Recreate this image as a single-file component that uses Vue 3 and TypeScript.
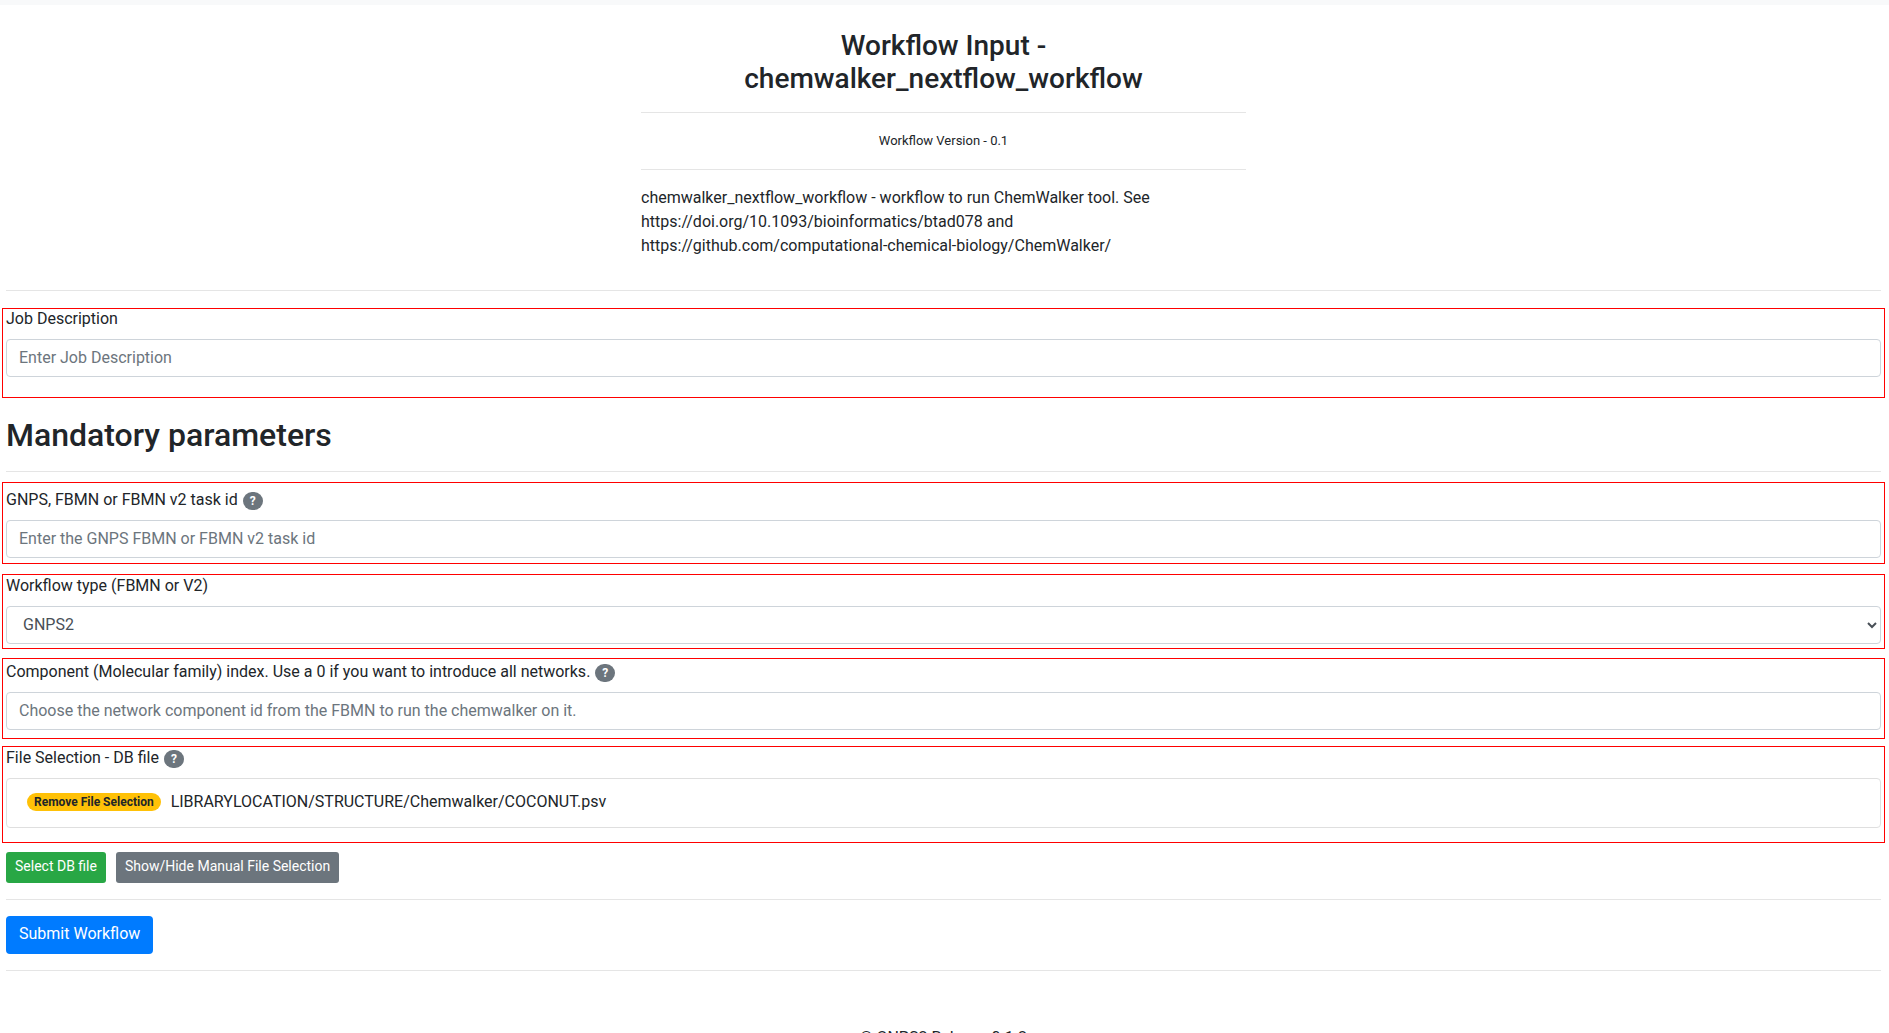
<script setup lang="ts">
import { ref } from 'vue'

const jobDescription = ref('')
const taskId = ref('')
const workflowType = ref('GNPS2')
const componentIndex = ref('')
const dbFile = ref('LIBRARYLOCATION/STRUCTURE/Chemwalker/COCONUT.psv')
</script>

<template>
  <div class="page">
    <div class="navbar-edge"></div>
    <main class="content">
      <header class="intro">
        <h1>Workflow Input - chemwalker_nextflow_workflow</h1>
        <hr />
        <p class="version">Workflow Version - 0.1</p>
        <hr />
        <p class="about">
          chemwalker_nextflow_workflow - workflow to run ChemWalker tool. See
          https://doi.org/10.1093/bioinformatics/btad078 and
          https://github.com/computational-chemical-biology/ChemWalker/
        </p>
      </header>
      <hr />
      <form @submit.prevent>
        <section class="field job">
          <label for="job">Job Description</label>
          <input id="job" v-model="jobDescription" type="text" placeholder="Enter Job Description" />
        </section>

        <h2>Mandatory parameters</h2>
        <hr />

        <section class="field task">
          <div class="label-row">
            <label for="task">GNPS, FBMN or FBMN v2 task id</label>
            <span class="badge help">?</span>
          </div>
          <input id="task" v-model="taskId" type="text" placeholder="Enter the GNPS FBMN or FBMN v2 task id" />
        </section>

        <section class="field type">
          <label for="type">Workflow type (FBMN or V2)</label>
          <select id="type" v-model="workflowType">
            <option>GNPS2</option>
            <option>FBMN</option>
          </select>
        </section>

        <section class="field component">
          <div class="label-row">
            <label for="component">Component (Molecular family) index. Use a 0 if you want to introduce all networks.</label>
            <span class="badge help">?</span>
          </div>
          <input
            id="component"
            v-model="componentIndex"
            type="text"
            placeholder="Choose the network component id from the FBMN to run the chemwalker on it."
          />
        </section>

        <section class="field file">
          <div class="label-row">
            <span class="caption">File Selection - DB file</span>
            <span class="badge help">?</span>
          </div>
          <div class="file-item">
            <button type="button" class="badge remove">Remove File Selection</button>
            <span>{{ dbFile }}</span>
          </div>
        </section>

        <div class="actions">
          <button type="button" class="btn small green">Select DB file</button>
          <button type="button" class="btn small gray">Show/Hide Manual File Selection</button>
        </div>
        <hr />
        <button type="submit" class="btn blue">Submit Workflow</button>
        <hr />
      </form>
    </main>
    <footer>© GNPS2 Release 0.1.2</footer>
  </div>
</template>

<style>
html {
  overflow: hidden;
}
body {
  margin: 0;
  height: 100vh;
  overflow: hidden;
  background: #fff;
}
</style>

<style scoped>
.page,
.page * {
  box-sizing: border-box;
}
.page {
  font-family: Roboto, 'Liberation Sans', sans-serif;
  font-size: 16px;
  line-height: 24px;
  color: #212529;
}
.navbar-edge {
  height: 5px;
  background: #f8f9fa;
}
.content {
  padding: 24px 8px 0 6px;
}
hr {
  height: 1px;
  margin: 16px 0;
  border: 0;
  background: #e5e5e5;
}
.intro {
  width: calc((100% + 30px) / 3 - 30px);
  margin: 0 auto;
}
h1 {
  margin: 0 0 17px;
  font-size: 28px;
  line-height: 33px;
  font-weight: 500;
  text-align: center;
}
.version {
  margin: 0;
  font-size: 13px;
  text-align: center;
}
.about {
  margin: 0;
  padding-bottom: 16px;
}
h2 {
  margin: 18px 0 16px;
  font-size: 32px;
  line-height: 39px;
  font-weight: 500;
}
h2 + hr {
  margin-bottom: 10px;
}

/* Outlined groups extend slightly beyond the content column */
.field {
  display: flex;
  flex-direction: column;
  gap: 10px;
  margin: 0 -4px;
  padding: 1px 3px;
  border: 1px solid #f00;
  line-height: 20px;
}
.job {
  margin-top: 17px;
  padding-top: 0;
  padding-bottom: 20px;
}
.task {
  padding-top: 7px;
  padding-bottom: 5px;
  margin-bottom: 10px;
}
.type {
  padding-bottom: 4px;
  margin-bottom: 9px;
}
.component {
  padding-top: 3px;
  padding-bottom: 8px;
  margin-bottom: 7px;
}
.file {
  padding-bottom: 14px;
  margin-bottom: 9px;
}
.label-row {
  display: flex;
  align-items: flex-end;
  gap: 5px;
  height: 20px;
}
.badge {
  display: inline-block;
  height: 18px;
  padding: 3px 7px;
  border: 0;
  border-radius: 10px;
  font-family: inherit;
  font-size: 12px;
  line-height: 12px;
  font-weight: 700;
  white-space: nowrap;
}
.help {
  background: #6c757d;
  color: #fff;
}
.remove {
  background: #ffc107;
  color: #212529;
}
input,
select {
  display: block;
  width: 100%;
  height: 38px;
  margin: 0;
  padding: 5px 12px 7px;
  border: 1px solid #ced4da;
  border-radius: 4px;
  background: #fff;
  color: #495057;
  font-family: inherit;
  font-size: 16px;
  line-height: 24px;
}
input::placeholder {
  color: #6c757d;
  opacity: 1;
}
.file-item {
  display: flex;
  align-items: center;
  gap: 10px;
  height: 50px;
  padding: 0 20px 2px;
  border: 1px solid #dfdfdf;
  border-radius: 4px;
}
.actions {
  display: flex;
  gap: 10px;
}
.btn {
  display: block;
  height: 38px;
  padding: 6px 13px 8px;
  border: 0;
  border-radius: 4px;
  color: #fff;
  font-family: inherit;
  font-size: 16px;
  line-height: 24px;
}
.small {
  height: 31px;
  padding: 4px 9px 6px;
  border-radius: 3px;
  font-size: 14px;
  line-height: 21px;
}
.green {
  background: #28a745;
}
.gray {
  background: #6c757d;
}
.blue {
  background: #007bff;
}
footer {
  padding: 39px 8px 24px 6px;
  text-align: center;
}
</style>
